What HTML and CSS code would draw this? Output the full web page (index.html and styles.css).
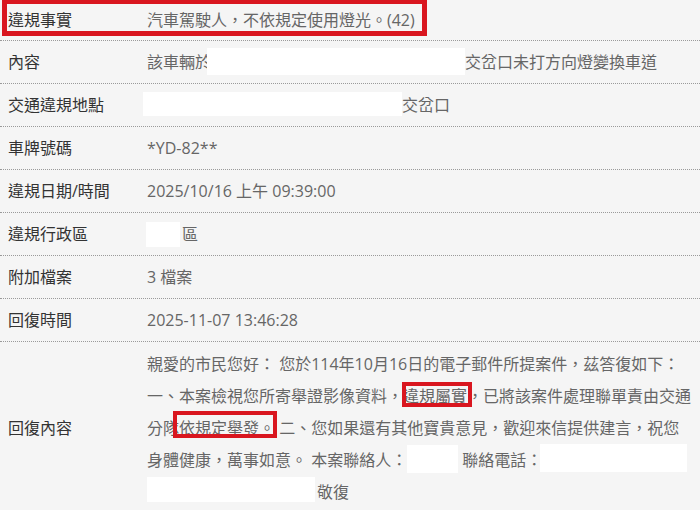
FILE: index.html
```html
<!DOCTYPE html>
<html lang="zh-Hant">
<head>
<meta charset="utf-8">
<title>案件回復</title>
<link rel="stylesheet" href="styles.css">
</head>
<body>
<div class="record">
  <div class="row row-first">
    <div class="label">違規事實</div>
    <div class="value">汽車駕駛人，不依規定使用燈光。(42)</div>
    <span class="callout"></span>
  </div>
  <div class="row">
    <div class="label">內容</div>
    <div class="value">該車輛於<span class="redact r-content"></span>交岔口未打方向燈變換車道</div>
  </div>
  <div class="row">
    <div class="label">交通違規地點</div>
    <div class="value"><span class="redact r-place"></span>交岔口</div>
  </div>
  <div class="row">
    <div class="label">車牌號碼</div>
    <div class="value">*YD-82**</div>
  </div>
  <div class="row">
    <div class="label">違規日期/時間</div>
    <div class="value">2025/10/16 上午 09:39:00</div>
  </div>
  <div class="row">
    <div class="label">違規行政區</div>
    <div class="value"><span class="redact r-district"></span>區</div>
  </div>
  <div class="row">
    <div class="label">附加檔案</div>
    <div class="value">3 檔案</div>
  </div>
  <div class="row">
    <div class="label">回復時間</div>
    <div class="value">2025-11-07 13:46:28</div>
  </div>
  <div class="row row-reply">
    <div class="label">回復內容</div>
    <div class="value reply">親愛的市民您好： 您於114年10月16日的電子郵件所提案件，茲答復如下：<br>一、本案檢視您所寄舉證影像資料，<span class="flag flag-a">違規屬實</span>，已將該案件處理聯單責由交通<br>分隊<span class="flag flag-b">依規定舉發。</span> 二、您如果還有其他寶貴意見，歡迎來信提供建言，祝您<br>身體健康，萬事如意。 本案聯絡人：<span class="redact r-contact"></span> 聯絡電話：<span class="redact r-phone"></span><br><span class="redact r-sign"></span>敬復</div>
  </div>
</div>
</body>
</html>
```

FILE: styles.css
```css
html, body {
  margin: 0;
  padding: 0;
  background: #f5f5f5;
}

body {
  font-family: "Open Sans", "Noto Sans CJK TC", sans-serif;
  font-size: 16px;
  color: #666;
  overflow: hidden;
}

.record {
  width: 700px;
}

.row {
  position: relative;
  display: grid;
  grid-template-columns: 139px 1fr;
  align-items: center;
  padding: 10px 5px 10px 8px;
  border-bottom: 1px dotted #9a9a9a;
  line-height: 22px;
}

.row-first {
  padding-top: 9px;
  padding-bottom: 9px;
}

.label {
  color: #333;
  white-space: nowrap;
}

.value {
  color: #666;
  white-space: nowrap;
}

.callout {
  position: absolute;
  left: 2px;
  top: -1px;
  width: 425px;
  height: 37px;
  box-sizing: border-box;
  border: 5px solid #d9161f;
}

.redact {
  display: inline-block;
  vertical-align: top;
  background: #fff;
}

.r-content {
  width: 258px;
  height: 27px;
  margin: -3px 0 -2px -4px;
}

.r-place {
  width: 259px;
  height: 24px;
  margin: -2px 0 0 -4px;
}

.r-district {
  width: 34px;
  height: 25px;
  margin: -1px 2px -2px -1px;
}

.row-reply {
  padding-top: 6px;
  padding-bottom: 6px;
}

.reply {
  line-height: 32px;
}

.r-contact {
  width: 51px;
  height: 28px;
  margin: 1px 0 3px 0;
}

.r-phone {
  width: 147px;
  height: 28px;
  margin: 0 0 4px -2px;
}

.r-sign {
  width: 168px;
  height: 25px;
  margin: 1px 2px 6px 0;
}

.flag {
  position: relative;
}

.flag::after {
  content: "";
  position: absolute;
  box-sizing: border-box;
  border: 4px solid #d9161f;
}

.flag-a::after {
  left: -1px;
  right: -5px;
  top: -3px;
  height: 25px;
}

.flag-b::after {
  left: -6px;
  right: -2px;
  top: -6px;
  height: 27px;
}
```
